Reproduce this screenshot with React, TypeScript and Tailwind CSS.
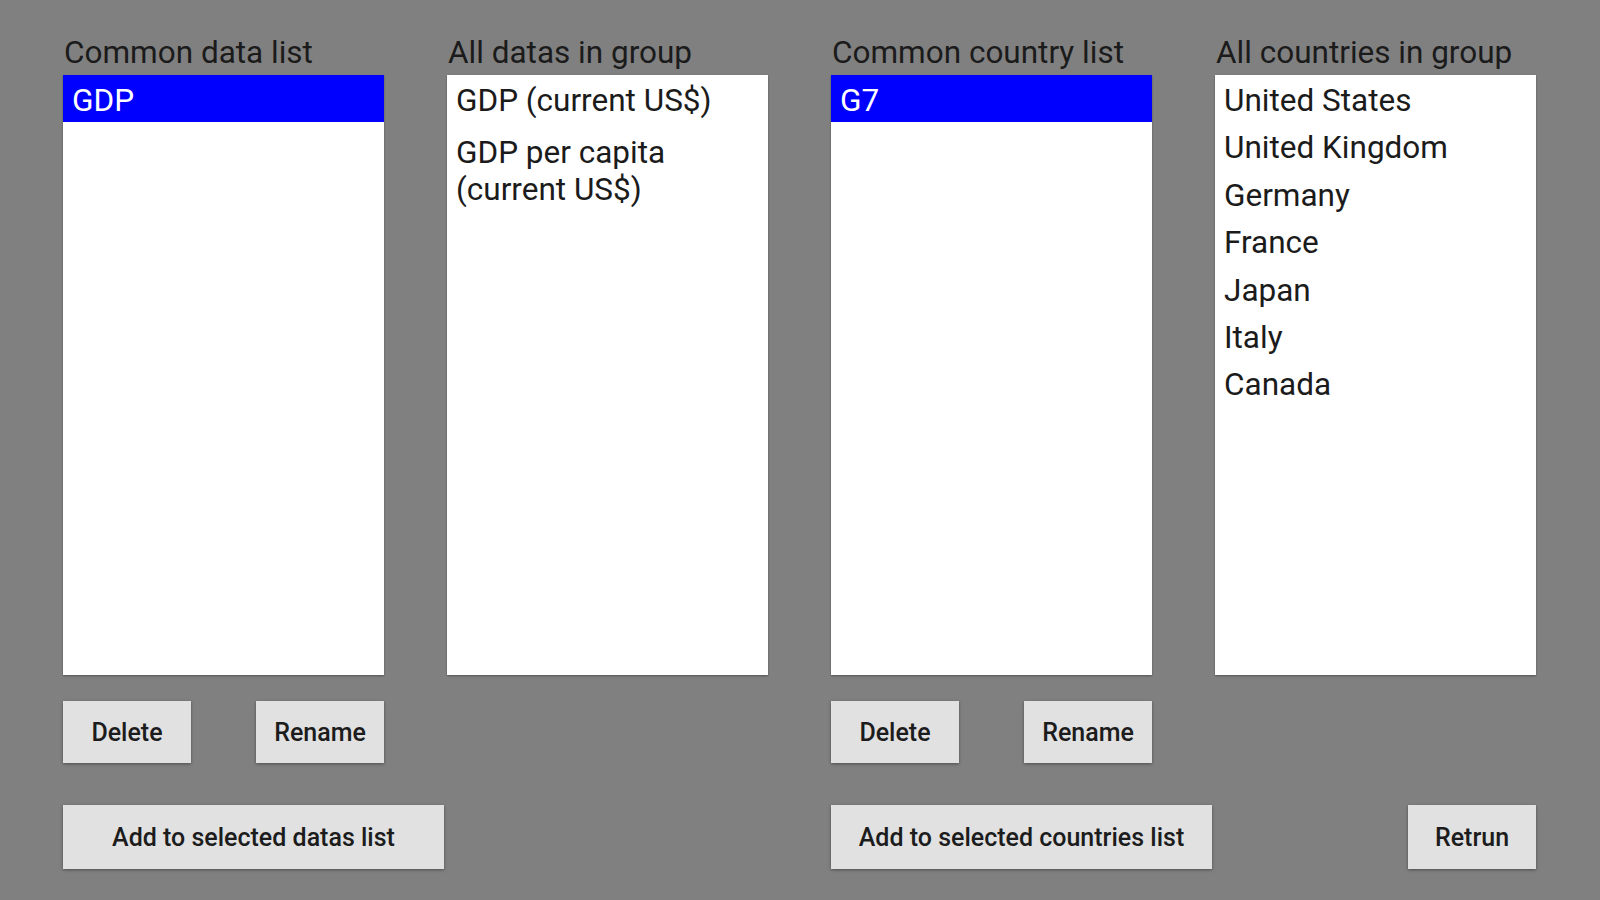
import React from "react";

// Saved lists screen: common data / country lists with their group members.

const FONT = { fontFamily: "Roboto, 'Noto Sans', 'Liberation Sans', sans-serif" };

type ListCol = { title: string; items: string[]; selected?: number; loose?: boolean };

const COLUMNS: ListCol[] = [
  { title: "Common data list", items: ["GDP"], selected: 0 },
  { title: "All datas in group", items: ["GDP (current US$)", "GDP per capita (current US$)"], loose: true },
  { title: "Common country list", items: ["G7"], selected: 0 },
  {
    title: "All countries in group",
    items: ["United States", "United Kingdom", "Germany", "France", "Japan", "Italy", "Canada"],
  },
];

function ListBox({ col }: { col: ListCol }) {
  return (
    <div className="flex flex-col">
      <div className="h-[37px] pl-[1px] text-[31.5px] leading-[37px] text-[#1b1b1b]">{col.title}</div>
      <div className="mt-[4px] h-[600px] overflow-hidden bg-white shadow-[0_1px_2px_rgba(0,0,0,0.35)]">
        {col.items.map((it, i) => (
          <div
            key={it}
            className={`px-[9px] text-[31.5px] leading-[37px] ${
              col.loose ? "pt-[7px] pb-[8px]" : "pt-[7px] pb-[3.4px]"
            } ${col.selected === i ? "bg-[#0000ff] text-white" : "text-[#1b1b1b]"}`}
          >
            {it}
          </div>
        ))}
      </div>
    </div>
  );
}

function Btn({ label, wide }: { label: string; wide?: boolean }) {
  return (
    <button
      type="button"
      className={`flex items-center justify-center bg-[#e1e1e1] pt-[2px] text-[25px] font-medium text-[#1c1c1c] shadow-[0_1px_3px_rgba(0,0,0,0.4)] ${
        wide ? "w-[381px]" : "w-[128px]"
      } h-full`}
    >
      {label}
    </button>
  );
}

export default function App() {
  return (
    <div className="min-h-screen bg-[#808080] pl-[63px] pr-[64px] pt-[34px]" style={FONT}>
      <div className="grid grid-cols-4 gap-x-[63px]">
        {COLUMNS.map((c) => (
          <ListBox key={c.title} col={c} />
        ))}
      </div>

      <div className="mt-[26px] grid h-[62px] grid-cols-4 gap-x-[63px]">
        <div className="flex justify-between">
          <Btn label="Delete" />
          <Btn label="Rename" />
        </div>
        <div />
        <div className="flex justify-between">
          <Btn label="Delete" />
          <Btn label="Rename" />
        </div>
        <div />
      </div>

      <div className="mt-[42px] grid h-[64px] grid-cols-4 gap-x-[63px]">
        <div className="col-span-2 flex">
          <Btn label="Add to selected datas list" wide />
        </div>
        <div className="col-span-2 flex justify-between">
          <Btn label="Add to selected countries list" wide />
          <Btn label="Retrun" />
        </div>
      </div>
    </div>
  );
}
